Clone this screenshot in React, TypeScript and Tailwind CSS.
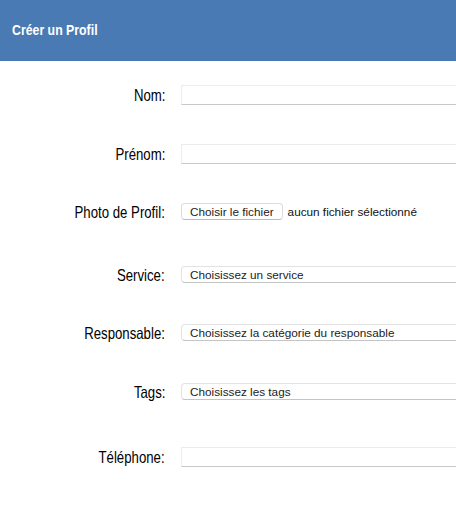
import React from 'react';

const Label = ({ children }: { children: React.ReactNode }) => (
  <div className="w-[165px] shrink-0 text-right">
    <span className="inline-block origin-right scale-x-[0.8] whitespace-nowrap text-[16.5px] leading-none text-black font-['Liberation_Sans',Arial,sans-serif]">
      {children}
    </span>
  </div>
);

const TextBox = () => (
  <div className="ml-4 h-5 w-[320px] shrink-0 border border-[#ececec] border-b-[#c9c9c9] bg-white" />
);

const SelectBox = ({ text }: { text: string }) => (
  <div className="ml-4 flex h-[17px] w-[320px] shrink-0 items-center rounded-[4px] border border-[#e3e3e3] border-b-[#c4c4c4] bg-white pl-2 text-[11.75px] text-[#222] font-['Liberation_Sans',sans-serif]">
    {text}
  </div>
);

export default function App() {
  return (
    <div className="h-[506px] w-[456px] overflow-hidden bg-white">
      <header className="flex h-[61px] items-center bg-[#4a7ab4] px-3">
        <h1 className="origin-left scale-x-[0.88] whitespace-nowrap text-[14px] font-bold text-white font-['Liberation_Sans',sans-serif]">
          Créer un Profil
        </h1>
      </header>
      <main className="flex flex-col">
        <div className="mt-[24px] flex h-5 items-center">
          <Label>Nom:</Label>
          <TextBox />
        </div>
        <div className="mt-[39px] flex h-5 items-center">
          <Label>Prénom:</Label>
          <TextBox />
        </div>
        <div className="mt-[39px] flex h-[17px] items-center">
          <Label>Photo de Profil:</Label>
          <div className="ml-4 flex items-center font-['Liberation_Sans',sans-serif] text-[11.75px] text-[#111]">
            <span className="flex h-[17px] items-center rounded-[4px] border border-[#dcdcdc] border-b-[#bdbdbd] bg-white px-[8px] text-[#222]">
              Choisir le fichier
            </span>
            <span className="ml-[5px]">aucun fichier sélectionné</span>
          </div>
        </div>
        <div className="mt-[46px] flex h-[17px] items-center">
          <Label>Service:</Label>
          <SelectBox text="Choisissez un service" />
        </div>
        <div className="mt-[41px] flex h-[17px] items-center">
          <Label>Responsable:</Label>
          <SelectBox text="Choisissez la catégorie du responsable" />
        </div>
        <div className="mt-[42px] flex h-[17px] items-center">
          <Label>Tags:</Label>
          <SelectBox text="Choisissez les tags" />
        </div>
        <div className="mt-[47px] flex h-5 items-center">
          <Label>Téléphone:</Label>
          <TextBox />
        </div>
      </main>
    </div>
  );
}
